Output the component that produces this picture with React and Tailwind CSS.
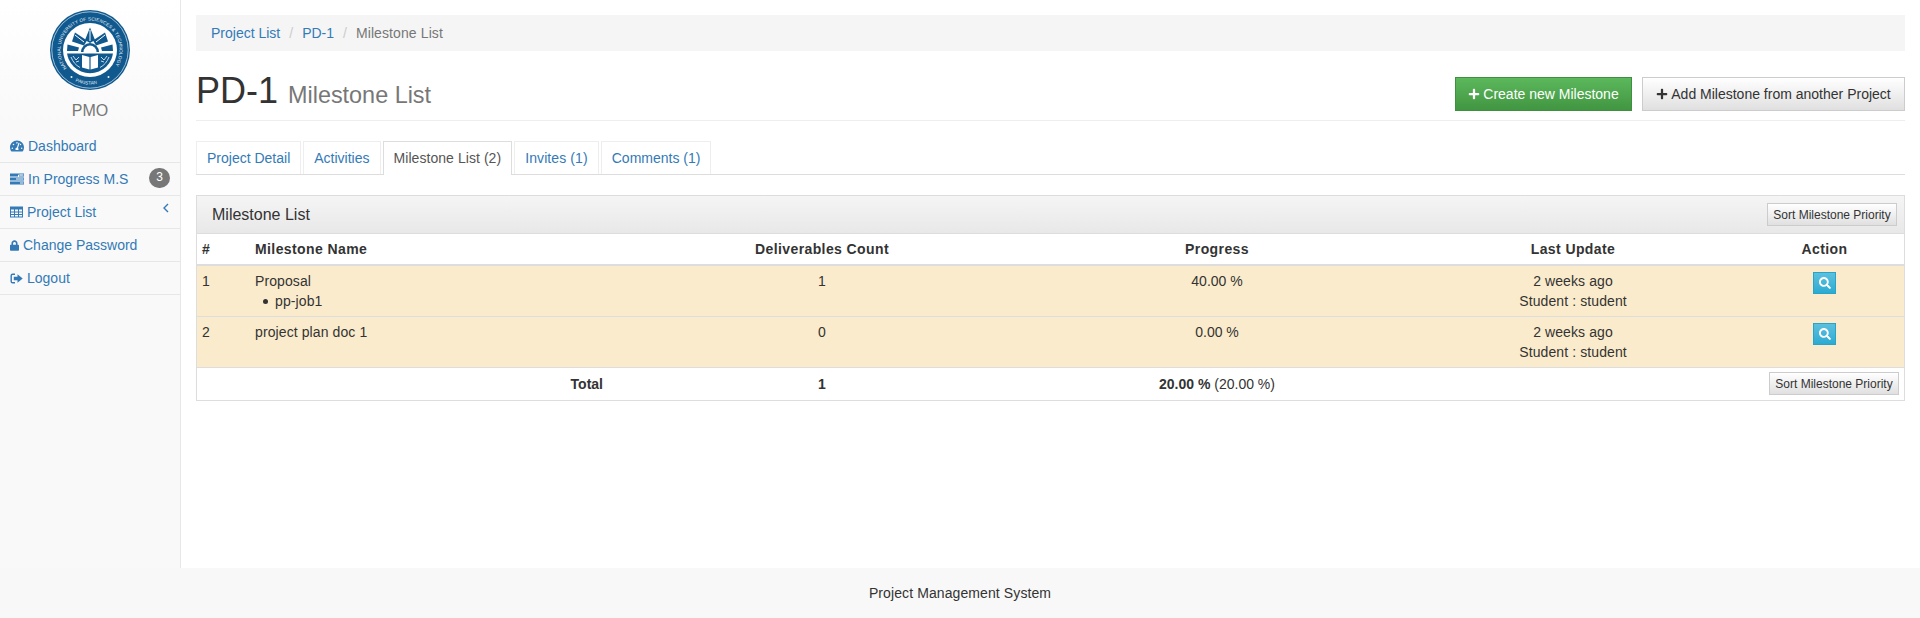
import React from 'react';
import { FaTachometerAlt, FaLock, FaPlus, FaSearch } from 'react-icons/fa';

const BLUE = '#10598f';

const Logo = () => (
  <svg width="82" height="82" viewBox="0 0 82 82">
    <defs>
      <path id="ringTop" d="M 17.8 59.2 A 29.5 29.5 0 1 1 64.2 59.2" />
      <path id="ringBottom" d="M 26.4 72.3 A 34.5 34.5 0 0 0 55.6 72.3" />
      <clipPath id="lower"><rect x="0" y="44.5" width="82" height="40" /></clipPath>
    </defs>
    <circle cx="41" cy="41" r="40" fill={BLUE} />
    <circle cx="41" cy="41" r="38.2" fill="none" stroke="#fff" strokeWidth="0.6" />
    <text fontSize="4.6" fill="#eef4f8" fontFamily="Liberation Sans, sans-serif">
      <textPath href="#ringTop" textLength="128">NATIONAL UNIVERSITY OF SCIENCES &amp; TECHNOLOGY</textPath>
    </text>
    <text fontSize="4.6" fill="#eef4f8" fontFamily="Liberation Sans, sans-serif">
      <textPath href="#ringBottom">PAKISTAN</textPath>
    </text>
    <circle cx="22.5" cy="68" r="1" fill="#eef4f8" />
    <circle cx="59.5" cy="68" r="1" fill="#eef4f8" />
    <circle cx="41" cy="41" r="27" fill="#fff" />
    <circle cx="41" cy="41" r="23.2" fill="#fff" />
    {/* rays */}
    <path d="M41 18.5l5 12.5-5 3-5-3z" fill={BLUE} />
    <path d="M41 21v11" stroke="#fff" strokeWidth="1" />
    <path d="M26 23.5l12 8-3 5-12-4z" fill={BLUE} />
    <path d="M56 23.5l-12 8 3 5 12-4z" fill={BLUE} />
    <path d="M26 26l9 7M56 26l-9 7" stroke="#fff" strokeWidth="1" />
    <path d="M18.5 35.5l11.5 3-1 3.5H18z" fill={BLUE} />
    <path d="M63.5 35.5l-11.5 3 1 3.5h11z" fill={BLUE} />
    {/* dome */}
    <path d="M32 43a9 9 0 0 1 18 0z" fill={BLUE} />
    <path d="M34.5 43a6.5 6.5 0 0 1 13 0z" fill="#fff" />
    {/* lower half with book and wreath */}
    <circle cx="41" cy="41" r="23.2" fill={BLUE} clipPath="url(#lower)" />
    <path d="M33 46l7.4 2v12.5L33 58.5zM49 46l-7.4 2v12.5L49 58.5z" fill="#fff" />
    <path d="M22 48c2 5 4.5 8 9 10.5M60 48c-2 5-4.5 8-9 10.5M24 47l3 4 3-3M58 47l-3 4-3-3M27 53l3-1M55 53l-3-1" fill="none" stroke="#dbe7f0" strokeWidth="0.9" />
  </svg>
);

const TasksIcon = () => (
  <svg width="14" height="12" viewBox="0 0 14 12" className="fill-[#337ab7]">
    <path d="M0 .5h14v3H9V2.3h3.6v-.6H0zM0 .5h8v3H0zM0 4.5h14v3H0zM0 4.5h5v3H0zM0 8.5h14v3H0z" />
    <path d="M9.5 1.6h4v.8h-4zM6 5.6h7.5v.8H6zM10 9.6h3.5v.8H10z" className="fill-[#f9f9f9]" />
  </svg>
);

const TableIcon = () => (
  <svg width="13" height="12" viewBox="0 0 13 12" className="fill-[#337ab7]">
    <path fillRule="evenodd" d="M0 .5h13v11H0zM1 3.5v2h3v-2zm4 0v2h3v-2zm4 0v2h3v-2zM1 6.5v1.5h3V6.5zm4 0v1.5h3V6.5zm4 0v1.5h3V6.5zM1 9v1.5h3V9zm4 0v1.5h3V9zm4 0v1.5h3V9z" />
  </svg>
);

const SignOutIcon = () => (
  <svg width="13" height="13" viewBox="0 0 13 13" className="fill-[#337ab7]">
    <path d="M5 1.5H2.6A2.1 2.1 0 0 0 .5 3.6v5.8a2.1 2.1 0 0 0 2.1 2.1H5v-1.4H2.6a.7.7 0 0 1-.7-.7V3.6a.7.7 0 0 1 .7-.7H5z" />
    <path d="M7.5 2.3l5.2 4.2-5.2 4.2V8.2H3.8V4.8h3.7z" />
  </svg>
);

const navItems = [
  { label: 'Dashboard', icon: <FaTachometerAlt className="w-[14px] h-[14px]" /> },
  { label: 'In Progress M.S', icon: <TasksIcon />, badge: '3' },
  { label: 'Project List', icon: <TableIcon />, caret: true },
  { label: 'Change Password', icon: <FaLock className="w-[9px] h-[11px]" /> },
  { label: 'Logout', icon: <SignOutIcon /> },
];

const tabs = [
  { label: 'Project Detail', className: 'h-[33px] px-[10px] pt-[6px] border border-b-0 border-[#eee] text-[#337ab7]' },
  { label: 'Activities', className: 'h-[33px] px-[10px] pt-[6px] border border-b-0 border-[#eee] text-[#337ab7]' },
  { label: 'Milestone List (2)', className: 'relative h-[34px] px-[10px] pt-[6px] border border-b-0 border-[#ddd] bg-white text-[#555] tracking-[0.06px]' },
  { label: 'Invites (1)', className: 'h-[33px] px-[10px] pt-[6px] border border-b-0 border-[#eee] text-[#337ab7] tracking-[0.1px]' },
  { label: 'Comments (1)', className: 'h-[33px] px-[10px] pt-[6px] border border-b-0 border-[#eee] text-[#337ab7]' },
];

const rows = [
  { id: 1, name: 'Proposal', jobs: ['pp-job1'], count: 1, progress: '40.00 %' },
  { id: 2, name: 'project plan doc 1', jobs: [], count: 0, progress: '0.00 %' },
];

const SortButton = () => (
  <button className="h-[23px] w-[130px] border border-[#ccc] bg-gradient-to-b from-white to-[#e0e0e0] text-xs leading-none text-[#333] whitespace-nowrap">
    Sort Milestone Priority
  </button>
);

const App = () => {
  return (
    <div className="h-[618px] flex flex-col bg-white text-sm leading-5 text-[#333] font-['Liberation_Sans',Arial,sans-serif]">
      <div className="flex flex-1 min-h-0">
        {/* Sidebar */}
        <aside className="w-[181px] shrink-0 border-r border-[#e7e7e7] bg-[#f9f9f9]">
          <div className="h-[130px] flex flex-col items-center pt-[9px] bg-gradient-to-b from-white to-[#f9f9f9]">
            <Logo />
            <span className="mt-[9px] text-base leading-[22px] text-[#777]">PMO</span>
          </div>
          <ul>
            {navItems.map((item) => (
              <li key={item.label} className="relative h-[33px] flex items-center gap-[4px] pl-[10px] border-b border-[#e7e7e7] text-[#337ab7]">
                {item.icon}
                <span>{item.label}</span>
                {item.badge && (
                  <span className="absolute right-[10px] top-[5px] w-[21px] h-[20px] rounded-full bg-[#777] text-white text-xs leading-[19px] text-center">
                    {item.badge}
                  </span>
                )}
                {item.caret && (
                  <svg width="6" height="10" viewBox="0 0 6 10" className="absolute right-[11px] top-[7px]">
                    <path d="M5 1L1 5l4 4" fill="none" stroke="#337ab7" strokeWidth="1.4" />
                  </svg>
                )}
              </li>
            ))}
          </ul>
        </aside>

        {/* Page content */}
        <main className="flex-1 min-w-0 pt-[15px] pl-[15px] pr-[15px]">
          <ol className="flex items-center h-9 px-[15px] bg-[#f5f5f5]">
            <li className="text-[#337ab7]">Project List</li>
            <li className="px-[9px] text-[#ccc]">/</li>
            <li className="text-[#337ab7]">PD-1</li>
            <li className="px-[9px] text-[#ccc]">/</li>
            <li className="text-[#777] tracking-[0.1px]">Milestone List</li>
          </ol>

          <div className="flex items-end justify-between h-[70px] pb-[9px] border-b border-[#eee]">
            <h1 className="text-[36px] leading-[32px] text-[#333]">
              PD-1 <small className="text-[23.4px] text-[#777]">Milestone List</small>
            </h1>
            <div className="flex gap-[10px]">
              <button className="flex items-center gap-[3px] h-[34px] w-[177px] justify-center border border-[#3e8f3e] bg-gradient-to-b from-[#5cb85c] to-[#419641] text-white">
                <FaPlus className="w-[12px] h-[12px]" />
                Create new Milestone
              </button>
              <button className="flex items-center gap-[3px] h-[34px] w-[263px] justify-center border border-[#ccc] bg-gradient-to-b from-white to-[#e0e0e0] text-[#333]">
                <FaPlus className="w-[12px] h-[12px]" />
                Add Milestone from another Project
              </button>
            </div>
          </div>

          {/* Tabs */}
          <ul className="flex gap-[2px] mt-5 border-b border-[#ddd] h-[34px]">
            {tabs.map((tab) => (
              <li key={tab.label} className={tab.className}>
                {tab.label}
              </li>
            ))}
          </ul>

          {/* Milestone panel */}
          <section className="mt-5 border border-[#ddd]">
            <div className="flex items-center justify-between h-[38px] pl-[15px] pr-[7px] border-b border-[#ddd] bg-gradient-to-b from-[#f5f5f5] to-[#e8e8e8]">
              <h3 className="text-base text-[#333]">Milestone List</h3>
              <SortButton />
            </div>
            <table className="w-full table-fixed border-collapse">
              <colgroup>
                <col className="w-[50px]" />
                <col className="w-[364px]" />
                <col className="w-[422px]" />
                <col className="w-[368px]" />
                <col className="w-[344px]" />
                <col />
              </colgroup>
              <thead>
                <tr className="h-[31px] border-b-2 border-[#ddd] font-bold tracking-[0.4px]">
                  <th className="px-[5px] text-left">#</th>
                  <th className="px-2 text-left">Milestone Name</th>
                  <th>Deliverables Count</th>
                  <th>Progress</th>
                  <th>Last Update</th>
                  <th>Action</th>
                </tr>
              </thead>
              <tbody>
                {rows.map((row) => (
                  <tr key={row.id} className="bg-[#faebcc] border-b border-[#ddd] align-top">
                    <td className="px-[5px] py-[5px]">{row.id}</td>
                    <td className="px-2 py-[5px] h-[51px] tracking-[0.1px]">
                      {row.name}
                      {row.jobs.length > 0 && (
                        <ul>
                          {row.jobs.map((job) => (
                            <li key={job} className="flex items-center gap-[7px] pl-2">
                              <span className="w-[5px] h-[5px] rounded-full bg-[#333]"></span>
                              {job}
                            </li>
                          ))}
                        </ul>
                      )}
                    </td>
                    <td className="py-[5px] text-center">{row.count}</td>
                    <td className="py-[5px] text-center">{row.progress}</td>
                    <td className="py-[5px] text-center tracking-[0.1px]">
                      2 weeks ago
                      <br />
                      Student : student
                    </td>
                    <td className="py-[5px] text-center">
                      <button className="inline-flex items-center justify-center mt-[1px] w-[23px] h-[22px] border border-[#28a4c9] bg-gradient-to-b from-[#5bc0de] to-[#2aabd2] text-white align-top">
                        <FaSearch className="w-[12px] h-[12px]" />
                      </button>
                    </td>
                  </tr>
                ))}
              </tbody>
              <tfoot>
                <tr className="h-[32px]">
                  <td colSpan="2" className="px-2 text-right font-bold">Total</td>
                  <td className="text-center font-bold">1</td>
                  <td className="text-center"><b>20.00 %</b> (20.00 %)</td>
                  <td></td>
                  <td className="text-right pr-[5px]"><span className="inline-flex align-middle"><SortButton /></span></td>
                </tr>
              </tfoot>
            </table>
          </section>
        </main>
      </div>

      <footer className="h-[50px] shrink-0 flex items-center justify-center bg-[#f8f8f8] text-[#333] tracking-[0.1px]">
        Project Management System
      </footer>
    </div>
  );
};

export default App;
